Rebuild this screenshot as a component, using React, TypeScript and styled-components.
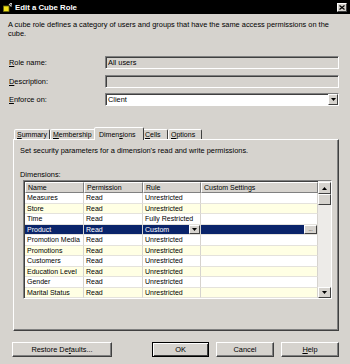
import React from 'react'
import styled, { createGlobalStyle } from 'styled-components'

const GlobalStyle = createGlobalStyle`
  body {
    margin: 0;
    font-family: 'Liberation Sans', Arial, sans-serif;
    font-size: 7.4px;
    color: #000;
  }
`

const Window = styled.div`
  width: 350px;
  height: 364px;
  box-sizing: border-box;
  background: #d6d3ce;
  display: flex;
  flex-direction: column;
  overflow: hidden;
`

const TitleBar = styled.div`
  height: 14px;
  background: #000;
  color: #fff;
  display: flex;
  align-items: center;
  padding: 0 3px;
  gap: 3px;
  font-weight: bold;
  font-size: 7.8px;

  .title {
    flex: 1;
  }
`

const CloseButton = styled.div`
  width: 10px;
  height: 9px;
  box-sizing: border-box;
  background: #d6d3ce;
  border: 1px solid;
  border-color: #fff #404040 #404040 #fff;
  display: flex;
  align-items: center;
  justify-content: center;
`

const Body = styled.div`
  flex: 1;
  display: flex;
  flex-direction: column;
  padding: 0 11px 7px 8px;
`

const Intro = styled.p`
  margin: 6px 0 0;
  line-height: 9px;
`

const Form = styled.div`
  display: grid;
  grid-template-columns: 97px 1fr;
  row-gap: 5.5px;
  align-items: center;
  margin-top: 18px;
`

const Label = styled.label`
  padding-left: 1px;
`

const Field = styled.div<{ $editable?: boolean }>`
  height: 13px;
  box-sizing: border-box;
  border: 1px solid;
  border-color: #808080 #fff #fff #808080;
  background: ${(p) => (p.$editable ? '#fff' : '#d6d3ce')};
  display: flex;
  align-items: center;
  padding-left: 2px;
  box-shadow: inset 1px 1px 0 #404040;
`

const DropArrow = styled.div<{ $size?: number }>`
  margin-left: auto;
  width: ${(p) => p.$size ?? 10}px;
  align-self: stretch;
  box-sizing: border-box;
  background: #d6d3ce;
  border: 1px solid;
  border-color: #fff #404040 #404040 #fff;
  display: flex;
  align-items: center;
  justify-content: center;
  color: #000;
  font-size: 5px;
  line-height: 1;
`

const TabStrip = styled.div`
  display: flex;
  align-items: flex-end;
  margin: 21px 0 0 6px;
  height: 12px;
  position: relative;
  z-index: 1;
  font-size: 7px;
`

const Tab = styled.div<{ $active?: boolean; $w: number }>`
  width: ${(p) => (p.$active ? p.$w + 4 : p.$w)}px;
  box-sizing: border-box;
  height: ${(p) => (p.$active ? 13 : 10)}px;
  margin: ${(p) => (p.$active ? '0 -2px -1px' : '0')};
  padding: ${(p) => (p.$active ? '1px 0 0 4px' : '0 0 0 2px')};
  background: #d6d3ce;
  border: 1px solid;
  border-bottom: none;
  border-color: #fff #404040 transparent #fff;
  border-radius: 2px 2px 0 0;
  display: flex;
  align-items: center;
  white-space: nowrap;
  overflow: hidden;
  position: ${(p) => (p.$active ? 'relative' : 'static')};
  z-index: ${(p) => (p.$active ? 1 : 0)};
`

const Panel = styled.div`
  height: 192px;
  box-sizing: border-box;
  margin-left: 5px;
  border: 1px solid;
  border-color: #fff #404040 #404040 #fff;
  box-shadow: inset -1px -1px 0 #808080;
  padding: 6px 7px 0 6px;
  display: flex;
  flex-direction: column;
`

const PanelText = styled.div`
  line-height: 9px;
`

const SectionLabel = styled.div`
  margin-top: 15px;
  line-height: 9px;
`

const GridFrame = styled.div`
  margin: 1px 0 0 3px;
  width: 309px;
  height: 119px;
  box-sizing: border-box;
  border: 1px solid;
  border-color: #808080 #fff #fff #808080;
  box-shadow: inset 1px 1px 0 #404040;
  display: flex;
  background: #fff;
  font-size: 7px;
`

const Table = styled.div`
  flex: 1;
  display: flex;
  flex-direction: column;
  padding: 1px 0 0 1px;
`

const columns = '59px 59px 58px 1fr'

const HeaderRow = styled.div`
  display: grid;
  grid-template-columns: ${columns};
  height: 11px;
`

const HeaderCell = styled.div`
  background: #d6d3ce;
  border: 1px solid;
  border-color: #fff #808080 #808080 #fff;
  padding-left: 2px;
  display: flex;
  align-items: center;
  white-space: nowrap;
`

const Row = styled.div<{ $tint?: boolean; $selected?: boolean }>`
  display: grid;
  grid-template-columns: ${columns};
  height: 10.5px;
  background: ${(p) => (p.$selected ? '#0a246a' : p.$tint ? '#ffffe4' : '#fff')};
  color: ${(p) => (p.$selected ? '#fff' : '#000')};
`

const Cell = styled.div`
  border-right: 1px solid #d6d3ce;
  border-bottom: 1px solid #e4e2dc;
  padding-left: 2px;
  display: flex;
  align-items: center;
  white-space: nowrap;
  overflow: hidden;
`

const Scrollbar = styled.div`
  width: 13px;
  display: flex;
  flex-direction: column;
  background: #edebe8;
  padding-top: 1px;
`

const ScrollButton = styled.div<{ $h: number }>`
  height: ${(p) => p.$h}px;
  box-sizing: border-box;
  background: #d6d3ce;
  border: 1px solid;
  border-color: #fff #404040 #404040 #fff;
  display: flex;
  align-items: center;
  justify-content: center;
  font-size: 5px;
`

const Track = styled.div`
  flex: 1;
`

const ButtonRow = styled.div`
  display: flex;
  gap: 7px;
  margin: 11px 0 0 4px;
  height: 15px;

  & > :first-child {
    margin-right: auto;
  }
`

const Button = styled.div<{ $w: number; $default?: boolean }>`
  width: ${(p) => p.$w}px;
  box-sizing: border-box;
  background: #d6d3ce;
  border: 1px solid;
  border-color: ${(p) => (p.$default ? '#000' : '#fff #404040 #404040 #fff')};
  box-shadow: ${(p) =>
    p.$default ? 'inset 1px 1px 0 #fff, inset -1px -1px 0 #404040' : 'inset -1px -1px 0 #808080'};
  display: flex;
  align-items: center;
  justify-content: center;
`

const Arrow = ({ up }: { up?: boolean }) => (
  <svg width="5" height="3" viewBox="0 0 5 3">
    <path d={up ? 'M2.5 0 L5 3 L0 3 Z' : 'M0 0 L5 0 L2.5 3 Z'} fill="#000" />
  </svg>
)

const CubeIcon = () => (
  <svg width="9" height="9" viewBox="0 0 9 9">
    <rect x="0.5" y="3" width="5.5" height="5.5" fill="#f2e21a" stroke="#6b6a10" strokeWidth="0.8" />
    <path d="M6 1 L8.5 3.5 M7 0.5 L8.8 0.5 L8.8 2.3" stroke="#c8c8c8" strokeWidth="1.1" fill="none" />
  </svg>
)

const CloseIcon = () => (
  <svg width="6" height="5" viewBox="0 0 6 5">
    <path d="M0.5 0.5 L5.5 4.5 M5.5 0.5 L0.5 4.5" stroke="#000" strokeWidth="1.2" />
  </svg>
)

type Dimension = { name: string; rule: string }

const dimensions: Dimension[] = [
  { name: 'Measures', rule: 'Unrestricted' },
  { name: 'Store', rule: 'Unrestricted' },
  { name: 'Time', rule: 'Fully Restricted' },
  { name: 'Product', rule: 'Custom' },
  { name: 'Promotion Media', rule: 'Unrestricted' },
  { name: 'Promotions', rule: 'Unrestricted' },
  { name: 'Customers', rule: 'Unrestricted' },
  { name: 'Education Level', rule: 'Unrestricted' },
  { name: 'Gender', rule: 'Unrestricted' },
  { name: 'Marital Status', rule: 'Unrestricted' },
]

const tintedRows = ['Store', 'Promotions', 'Education Level', 'Marital Status']

export default function App() {
  return (
    <Window>
      <GlobalStyle />
      <TitleBar>
        <CubeIcon />
        <span className="title">Edit a Cube Role</span>
        <CloseButton>
          <CloseIcon />
        </CloseButton>
      </TitleBar>
      <Body>
        <Intro>
          A cube role defines a category of users and groups that have the same access permissions on the
          cube.
        </Intro>
        <Form>
          <Label>
            <u>R</u>ole name:
          </Label>
          <Field>All users</Field>
          <Label>
            <u>D</u>escription:
          </Label>
          <Field />
          <Label>
            <u>E</u>nforce on:
          </Label>
          <Field $editable>
            Client
            <DropArrow>
              <Arrow />
            </DropArrow>
          </Field>
        </Form>

        <TabStrip>
          <Tab $w={36}>
            <u>S</u>ummary
          </Tab>
          <Tab $w={46}>
            <u>M</u>embership
          </Tab>
          <Tab $w={46} $active>
            Dimen<u>s</u>ions
          </Tab>
          <Tab $w={26}>
            <u>C</u>ells
          </Tab>
          <Tab $w={34}>
            <u>O</u>ptions
          </Tab>
        </TabStrip>
        <Panel>
          <PanelText>Set security parameters for a dimension's read and write permissions.</PanelText>
          <SectionLabel>Dimensions:</SectionLabel>
          <GridFrame>
            <Table>
              <HeaderRow>
                <HeaderCell>Name</HeaderCell>
                <HeaderCell>Permission</HeaderCell>
                <HeaderCell>Rule</HeaderCell>
                <HeaderCell>Custom Settings</HeaderCell>
              </HeaderRow>
              {dimensions.map((d) => {
                const selected = d.name === 'Product'
                return (
                  <Row key={d.name} $selected={selected} $tint={tintedRows.includes(d.name)}>
                    <Cell>{d.name}</Cell>
                    <Cell>Read</Cell>
                    <Cell>
                      {d.rule}
                      {selected && (
                        <DropArrow $size={11}>
                          <Arrow />
                        </DropArrow>
                      )}
                    </Cell>
                    <Cell>
                      {selected && <DropArrow $size={13}>...</DropArrow>}
                    </Cell>
                  </Row>
                )
              })}
            </Table>
            <Scrollbar>
              <ScrollButton $h={12}>
                <Arrow up />
              </ScrollButton>
              <ScrollButton $h={11} />
              <Track />
              <ScrollButton $h={11}>
                <Arrow />
              </ScrollButton>
            </Scrollbar>
          </GridFrame>
        </Panel>

        <ButtonRow>
          <Button $w={100}>
            Restore De<u>f</u>aults...
          </Button>
          <Button $w={57} $default>
            OK
          </Button>
          <Button $w={58}>Cancel</Button>
          <Button $w={58}>
            <u>H</u>elp
          </Button>
        </ButtonRow>
      </Body>
    </Window>
  )
}
